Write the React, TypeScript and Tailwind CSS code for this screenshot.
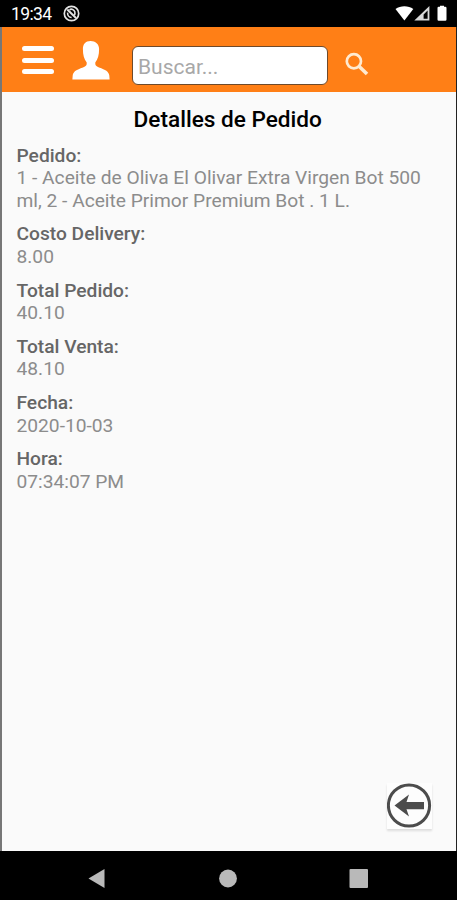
type Detail = {
  label: string;
  value: string;
};

const details: Detail[] = [
  {
    label: 'Pedido:',
    value: '1 - Aceite de Oliva El Olivar Extra Virgen Bot 500 ml, 2 - Aceite Primor Premium Bot . 1 L.',
  },
  { label: 'Costo Delivery:', value: '8.00' },
  { label: 'Total Pedido:', value: '40.10' },
  { label: 'Total Venta:', value: '48.10' },
  { label: 'Fecha:', value: '2020-10-03' },
  { label: 'Hora:', value: '07:34:07 PM' },
];

function StatusBar() {
  return (
    <div className="flex h-[27px] shrink-0 items-center bg-black pl-[11px] pr-[9px] text-white">
      <span className="w-[52px] pt-[2px] text-[17.5px] leading-none tracking-[-0.6px]">19:34</span>
      <svg className="h-[17px] w-[17px]" viewBox="0 0 17 17" fill="none" stroke="#e4e4e4">
        <circle cx="8.5" cy="8.5" r="7.2" strokeWidth="1.7" />
        <path d="M4.300 4.500 13 13" strokeWidth="2" />
        <path d="M6.500 4.800C8.500 3.400 11.200 4.600 11.800 6.800c.4 1.400.1 2.600-.5 3.600M4.600 7.600c-.2 2.600 1.500 4.700 4 4.900" strokeWidth="1.600" />
      </svg>
      <svg className="ml-auto h-[17px] w-[53px]" viewBox="0 0 53 17" fill="#fff">
        <path d="M.5 4C5.5.2 13.3.2 18.3 4L9.4 15.4Z" />
        <path d="M34.400 1v14.500H19.300ZM32.600 5.500l-4 4v4.300h4Z" fill="#d8d8d8" fillRule="evenodd" />
        <path d="M42.500 3q0-1.200 1.200-1.200H45V.8h4v1h1.300Q51.500 1.800 51.500 3v11.600q0 1.200-1.200 1.200h-6.600Q42.500 15.800 42.500 14.600Z" />
      </svg>
    </div>
  );
}

function Header() {
  return (
    <header className="flex h-[65px] shrink-0 items-start bg-[#ff7f16] pl-[20px]">
      <button aria-label="Menú" className="mt-[19px] flex w-[32px] flex-col gap-[6.500px]">
        <span className="h-[5px] w-full rounded-full bg-white" />
        <span className="h-[5px] w-full rounded-full bg-white" />
        <span className="h-[5px] w-full rounded-full bg-white" />
      </button>
      <button aria-label="Perfil" className="ml-[18px] mt-[14px]">
        <svg className="h-[39px] w-[38px]" viewBox="0 0 38 39" fill="#fff">
          <path d="M18.500 0C13.500 0 10.900 3 10.900 8c0 6 1.200 10.200 3.800 13.500.3 2.600-.6 3.900-3.700 5-6.600 2.300-9.700 4-10.300 8L.4 38.500h37.200l-.3-4c-.6-4-3.700-5.700-10.300-8-3.100-1.100-4-2.400-3.700-5C25.900 18.200 27.100 14 27.100 8 27.100 3 23.500 0 18.500 0Z" />
        </svg>
      </button>
      <input
        type="text"
        placeholder="Buscar..."
        className="ml-[22px] mt-[19px] h-[39px] w-[196px] rounded-[6px] border-[1.500px] border-[#6e4a2b] bg-white px-[5px] pt-[2px] text-[21px] text-[#777] outline-none placeholder:text-[#a8a8a8]"
      />
      <button aria-label="Buscar" className="ml-[17px] mt-[25px]">
        <svg className="h-[24px] w-[24px]" viewBox="0 0 24 24" fill="none" stroke="#ffead0">
          <circle cx="8.900" cy="9.300" r="7.100" strokeWidth="2.700" />
          <path d="M14 14.300 22 22" strokeWidth="3.600" />
        </svg>
      </button>
    </header>
  );
}

function NavigationBar() {
  return (
    <nav className="flex h-[49px] shrink-0 items-start bg-black pl-[87.500px] pt-[18px]">
      <svg className="h-[19px] w-[287px]" viewBox="0 0 287 19" fill="#b9b9b9">
        <path d="M.5 9.500 16.500 0v19Z" />
        <circle cx="140" cy="9.500" r="8.900" />
        <rect x="261.500" y="0" width="18.500" height="19" rx="1" />
      </svg>
    </nav>
  );
}

export default function App() {
  return (
    <div className="flex h-[900px] w-[457px] flex-col overflow-hidden bg-black font-['Roboto',sans-serif]">
      <StatusBar />
      <div className="flex min-h-0 flex-1 flex-col border-l-2 border-r border-l-[#777] border-r-[#222] bg-[#fafafa]">
        <Header />
        <main className="flex flex-1 flex-col pl-[14.500px] pr-[22px] pt-[14px]">
          <h1 className="pl-[5px] text-center text-[22.600px] font-medium leading-[27px] text-black">
            Detalles de Pedido
          </h1>
          <dl className="mt-[11.500px] flex flex-col gap-[11.250px] text-[19.200px] leading-[22.500px]">
            {details.map((detail) => (
              <div key={detail.label}>
                <dt className="font-medium text-[#666]">{detail.label}</dt>
                <dd className="text-[#8c8c8c]">{detail.value}</dd>
              </div>
            ))}
          </dl>
          <button
            aria-label="Volver"
            className="mb-[22px] ml-auto mr-[2px] mt-auto h-[46px] w-[45px] bg-[#fdfdfd] shadow-[0_2px_2px_#ddd]"
          >
            <svg className="h-[46px] w-[45px]" viewBox="0 0 45 46">
              <circle cx="22" cy="22.500" r="20.600" fill="none" stroke="#4c4c4c" strokeWidth="3" />
              <path d="M7.500 22.500 22 11.500 19.500 19H37v7.200H19.500L22 33.500Z" fill="#4c4c4c" />
            </svg>
          </button>
        </main>
      </div>
      <NavigationBar />
    </div>
  );
}
